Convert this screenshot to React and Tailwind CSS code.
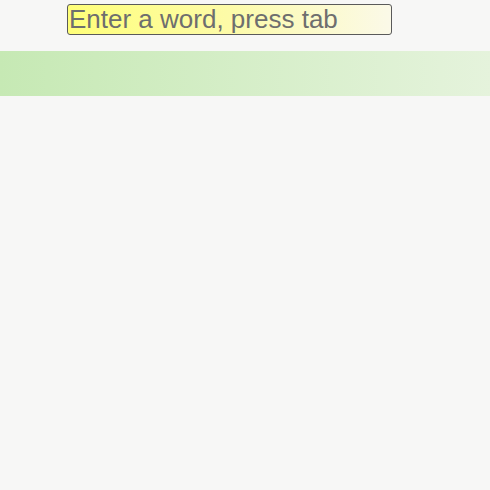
import React, { useState } from 'react';

const App = () => {
  const [word, setWord] = useState('');

  return (
    <div className="min-h-[490px] w-full bg-[#f7f7f6] font-['Liberation_Sans',Arial,sans-serif]">
      <div className="pt-[4px] pl-[67px]">
        <input
          type="text"
          value={word}
          onChange={(e) => setWord(e.target.value)}
          placeholder="Enter a word, press tab"
          className="block w-[325px] h-[31px] px-[1px] pb-[1px] border border-[#5a5a5a] rounded-[3px] bg-gradient-to-r from-[#ffff78] via-[#fdfba8] via-50% to-[#fbf9e8] text-[26px] leading-none text-[#6e6e6e] placeholder-[#6e6e6e] focus:outline-none"
        />
      </div>

      {/* Results bar */}
      <div className="mt-[16px] h-[45px] w-full bg-gradient-to-r from-[#c6e9b4] to-[#e5f3dc]"></div>
    </div>
  );
};

export default App;
